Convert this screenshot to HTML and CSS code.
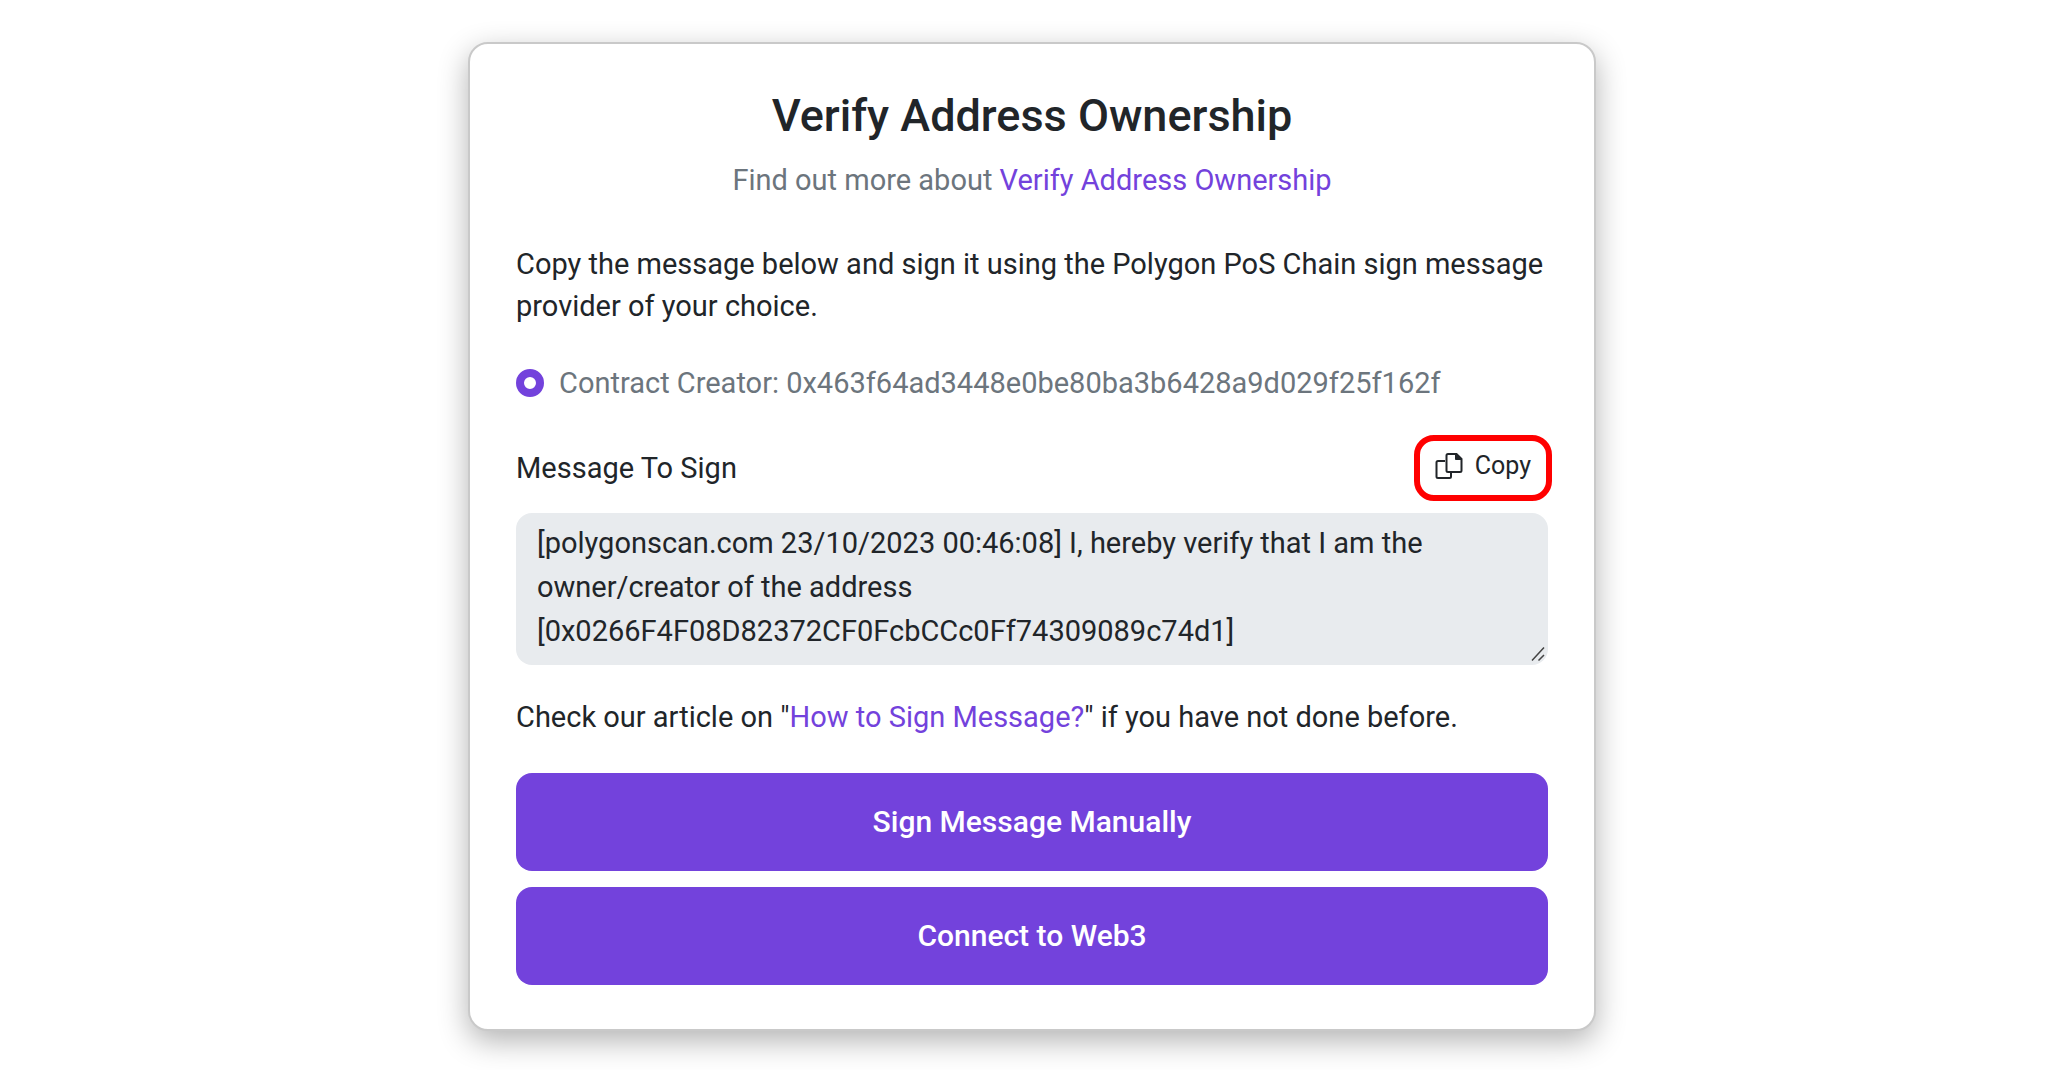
FILE: index.html
```html
<!DOCTYPE html>
<html lang="en">
<head>
<meta charset="utf-8">
<meta name="viewport" content="width=device-width, initial-scale=1">
<title>Verify Address Ownership</title>
<link rel="stylesheet" href="styles.css">
</head>
<body>
<main class="page">
  <form class="card">
    <header class="card-header">
      <h1 class="title">Verify Address Ownership</h1>
      <p class="subtitle">Find out more about <a href="#about">Verify Address Ownership</a></p>
    </header>
    <p class="intro">Copy the message below and sign it using the Polygon PoS Chain sign message provider of your choice.</p>
    <label class="creator">
      <input class="radio" type="radio" name="creator" checked>
      <span>Contract Creator: 0x463f64ad3448e0be80ba3b6428a9d029f25f162f</span>
    </label>
    <div class="message-head">
      <label for="message">Message To Sign</label>
      <button class="copy" type="button">
        <svg class="copy-icon" viewBox="0 0 28 28" fill="none" stroke="currentColor" stroke-width="2" aria-hidden="true">
          <path d="M10 9H3Q1.500 9 1.500 10.500V24.500Q1.500 26 3 26H14.500Q16 26 16 24.500V20.500"/>
          <path d="M21.500 2H13Q11.500 2 11.500 3.500V18.500Q11.500 20 13 20H25Q26.500 20 26.500 18.500V7Z"/>
          <path d="M20.500 2V7.500H26.500Z" fill="currentColor" stroke-width="1"/>
        </svg>
        Copy
      </button>
    </div>
    <div class="message-box">
      <textarea class="message" id="message" rows="3" readonly>[polygonscan.com 23/10/2023 00:46:08] I, hereby verify that I am the owner/creator of the address [0x0266F4F08D82372CF0FcbCCc0Ff74309089c74d1]</textarea>
      <svg class="grip" viewBox="0 0 14 14" fill="none" stroke="#444" stroke-width="1.500" aria-hidden="true">
        <path d="M1 13.500L13 0.500M7.500 13.500L13 8"/>
      </svg>
    </div>
    <p class="help">Check our article on "<a href="#how-to">How to Sign Message?</a>" if you have not done before.</p>
    <div class="actions">
      <button class="action" type="button">Sign Message Manually</button>
      <button class="action" type="button">Connect to Web3</button>
    </div>
  </form>
</main>
</body>
</html>
```

FILE: styles.css
```css
* {
  box-sizing: border-box;
}

body {
  margin: 0;
  background: #fff;
  color: #212529;
  font: 400 29px/42px Roboto, "Liberation Sans", sans-serif;
}

h1,
p {
  margin: 0;
}

a {
  color: #7342dc;
  text-decoration: none;
}

button,
textarea {
  font: inherit;
  color: inherit;
  border: 0;
}

.page {
  display: flex;
  justify-content: center;
  padding: 42px 24px 40px;
}

.card {
  display: flex;
  flex-direction: column;
  width: 100%;
  max-width: 1128px;
  padding: 44px 46px;
  background: #fff;
  border: 2px solid #c9c9c9;
  border-radius: 20px;
  box-shadow: 0 10px 30px rgba(0, 0, 0, 0.3);
}

.card-header {
  display: flex;
  flex-direction: column;
  gap: 15px;
  text-align: center;
}

.title {
  font-size: 45px;
  line-height: 56px;
  font-weight: 500;
}

.subtitle,
.creator {
  color: #6c757d;
}

.intro {
  margin-top: 42px;
}

.creator {
  display: flex;
  align-items: center;
  gap: 15px;
  margin-top: 35px;
}

.radio {
  appearance: none;
  flex: none;
  width: 28px;
  height: 28px;
  margin: 0;
  border: 8px solid #7342dc;
  border-radius: 50%;
  background: #fff;
}

.message-head {
  display: flex;
  align-items: center;
  justify-content: space-between;
  margin-top: 35px;
}

.copy {
  display: flex;
  align-items: center;
  gap: 12px;
  padding: 6px 17px 10px;
  background: #fff;
  border-radius: 16px;
  outline: 6px solid #f00;
  outline-offset: -2px;
  font-size: 25px;
}

.copy-icon {
  width: 28px;
  height: 28px;
}

.message-box {
  position: relative;
  margin-top: 16px;
}

.message {
  display: block;
  width: 100%;
  height: 152px;
  padding: 8px 21px;
  background: #e8ebee;
  border-radius: 16px;
  line-height: 44px;
  outline: 0;
  resize: none;
}

.grip {
  position: absolute;
  right: 3px;
  bottom: 4px;
  width: 14px;
  height: 14px;
}

.help {
  margin-top: 31px;
}

.actions {
  display: flex;
  flex-direction: column;
  gap: 16px;
  margin-top: 35px;
}

.action {
  padding: 28px 24px;
  background: #7342dc;
  border-radius: 16px;
  color: #fff;
  font-size: 30px;
  font-weight: 500;
}
```
